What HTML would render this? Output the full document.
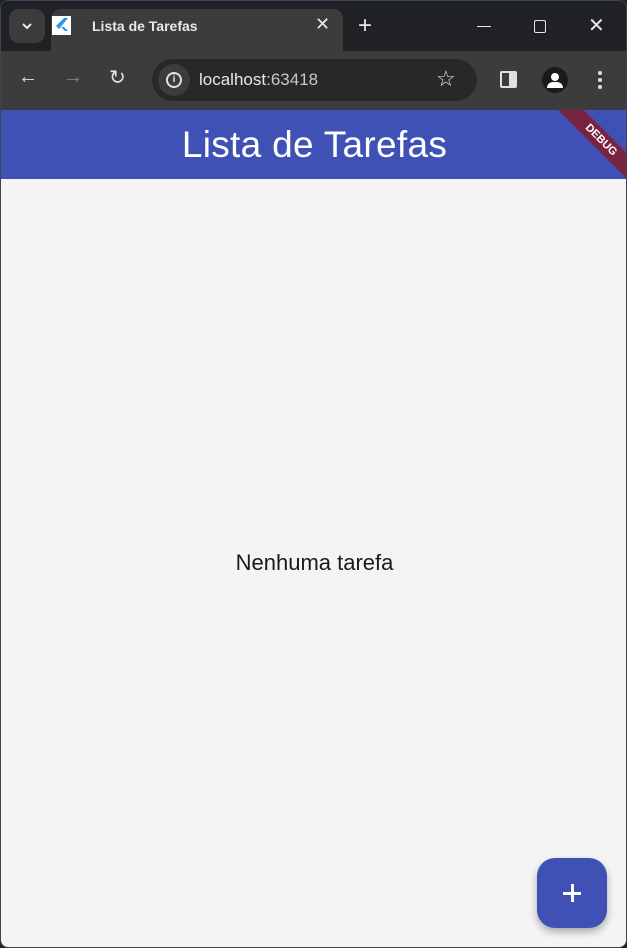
<!DOCTYPE html>
<html><head><style>
*{margin:0;padding:0;box-sizing:border-box}
body{width:627px;height:948px;background:#202124;font-family:"Liberation Sans",sans-serif;position:relative;overflow:hidden}
.win{position:absolute;inset:0;border:1px solid #3c4450;border-radius:8px;overflow:hidden;background:#202124}
.tabbar{position:absolute;left:0;top:0;width:627px;height:50px;background:#202124}
.tab{position:absolute;left:50px;top:8px;width:292px;height:42px;background:#3c3c3c;border-radius:10px 10px 0 0}
.toolbar{position:absolute;left:0;top:50px;width:627px;height:59px;background:#3c3c3c}
.omni{position:absolute;left:151px;top:8px;width:325px;height:42px;background:#282828;border-radius:21px}
.app{position:absolute;left:0;top:109px;width:627px;height:839px;background:#f4f4f4;overflow:hidden}
.bar{position:absolute;left:0;top:0;width:627px;height:69px;background:#3f51b5;color:#fff;font-size:37px;text-align:center;line-height:69px;letter-spacing:0.3px}
.fab{position:absolute;left:536px;top:748px;width:70px;height:70px;background:#3f51b5;border-radius:18px;box-shadow:0 4px 8px rgba(0,0,0,.3)}
</style></head><body><div class="win">
<div class="tabbar">
<div style="position:absolute;left:8px;top:8px;width:36px;height:34px;background:#3c3c3c;border-radius:10px"></div>
<svg style="position:absolute;left:18px;top:18px" width="16" height="14"><path d="M4 5l4 4 4-4" stroke="#e8e8e8" stroke-width="2" fill="none"/></svg>
<div class="tab">
<div style="position:absolute;left:1px;top:7px;width:19px;height:19px;background:#fff"></div>
<svg style="position:absolute;left:1px;top:7px" width="19" height="19"><path d="M12 2L4 10l3 3 9-11zM9 11l4 4h3l-4-4z" fill="#2196f3"/></svg>
<div style="position:absolute;left:41px;top:9px;color:#e8e8e8;font-size:14px;font-weight:bold">Lista de Tarefas</div>
<div style="position:absolute;left:264px;top:5px;color:#e8e8e8;font-size:18px">✕</div>
</div>
<div style="position:absolute;left:357px;top:11px;color:#e8e8e8;font-size:24px">+</div>
<div style="position:absolute;left:476px;top:25px;width:14px;height:1px;background:#e8e8e8"></div>
<div style="position:absolute;left:533px;top:19px;width:12px;height:13px;border:1.5px solid #e8e8e8;border-radius:2px"></div>
<div style="position:absolute;left:587px;top:12px;color:#e8e8e8;font-size:20px">✕</div>
</div>
<div class="toolbar">
<div style="position:absolute;left:17px;top:15px;color:#e0e0e0;font-size:20px">←</div>
<div style="position:absolute;left:62px;top:15px;color:#808080;font-size:20px">→</div>
<div style="position:absolute;left:108px;top:14px;color:#e0e0e0;font-size:20px">↻</div>
<div class="omni">
<div style="position:absolute;left:6px;top:5px;width:32px;height:32px;border-radius:16px;background:#3c3c3c"></div>
<div style="position:absolute;left:14px;top:13px;width:16px;height:16px;border:2px solid #e0e0e0;border-radius:50%;color:#e0e0e0;font-size:10px;text-align:center;line-height:12px;font-weight:bold">i</div>
<div style="position:absolute;left:47px;top:11px;color:#e8e8e8;font-size:17px">localhost<span style="color:#c8c8c8">:63418</span></div>
<div style="position:absolute;left:284px;top:7px;color:#e0e0e0;font-size:22px">☆</div>
</div>
<div style="position:absolute;left:499px;top:20px;width:17px;height:17px;border:2px solid #e0e0e0;border-radius:2px"><div style="position:absolute;right:0;top:0;width:6px;height:13px;background:#e0e0e0"></div></div>
<div style="position:absolute;left:541px;top:16px;width:26px;height:26px;border-radius:50%;background:#1a1a1a"><div style="position:absolute;left:9px;top:6px;width:8px;height:8px;border-radius:50%;background:#fff"></div><div style="position:absolute;left:5px;top:15px;width:16px;height:6px;border-radius:8px 8px 0 0;background:#fff"></div></div>
<div style="position:absolute;left:597px;top:20px;width:4px;height:4px;border-radius:2px;background:#e0e0e0;box-shadow:0 7px #e0e0e0,0 14px #e0e0e0"></div>
</div>
<div class="app">
<div class="bar">Lista de Tarefas</div>
<div style="position:absolute;left:540px;top:21px;width:120px;height:18px;background:#7a2340;transform:rotate(45deg);color:#fff;font-size:11px;font-weight:bold;text-align:center;line-height:18px">DEBUG</div>
<div style="position:absolute;left:0;top:440px;width:627px;text-align:center;font-size:22px;color:#1a1a1a">Nenhuma tarefa</div>
<div class="fab"><div style="position:absolute;left:26px;top:34px;width:18px;height:2.5px;background:#fff"></div><div style="position:absolute;left:34px;top:26px;width:2.5px;height:18px;background:#fff"></div></div>
</div>
</div></body></html>
